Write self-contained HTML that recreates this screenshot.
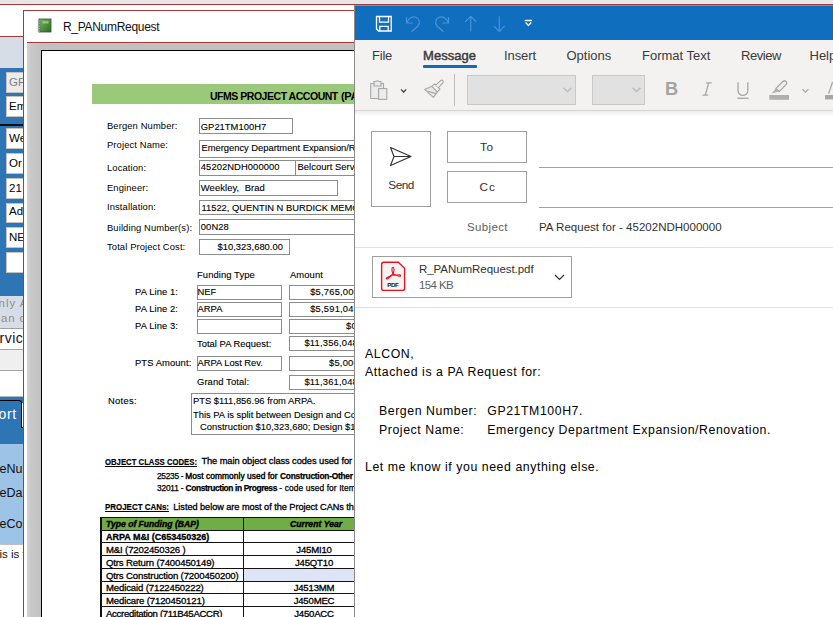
<!DOCTYPE html><html><head><meta charset="utf-8"><style>
html,body{margin:0;padding:0}
body{width:833px;height:617px;overflow:hidden;position:relative;background:#fff;font-family:"Liberation Sans",sans-serif}
div{box-sizing:border-box}
</style></head><body>
<div style="position:absolute;left:0px;top:0px;width:833px;height:4px;background:#e6e6e6"></div>
<div style="position:absolute;left:0px;top:4px;width:833px;height:1px;background:#a8383c"></div>
<div style="position:absolute;left:0px;top:36px;width:23px;height:1px;background:#a8383c"></div>
<div style="position:absolute;left:0px;top:37px;width:23px;height:31px;background:#d6dde6"></div>
<div style="position:absolute;left:0px;top:68px;width:23px;height:228px;background:#2e75b6"></div>
<div style="position:absolute;left:6px;top:72px;width:30px;height:20.5px;background:#ececec;border:1px solid #c9c0b8"></div>
<div style="position:absolute;left:9px;top:76.57px;font-size:11.5px;line-height:11.5px;color:#7f7f7f;font-weight:normal;letter-spacing:0px;white-space:pre;">GP</div>
<div style="position:absolute;left:6px;top:96px;width:30px;height:20.5px;background:#fff;border:1px solid #c9c0b8"></div>
<div style="position:absolute;left:9px;top:100.87px;font-size:11.5px;line-height:11.5px;color:#000;font-weight:normal;letter-spacing:0px;white-space:pre;">Em</div>
<div style="position:absolute;left:6px;top:128px;width:30px;height:20.5px;background:#fff;border:1px solid #c9c0b8"></div>
<div style="position:absolute;left:9px;top:132.97px;font-size:11.5px;line-height:11.5px;color:#000;font-weight:normal;letter-spacing:0px;white-space:pre;">We</div>
<div style="position:absolute;left:6px;top:153px;width:30px;height:20.5px;background:#fff;border:1px solid #c9c0b8"></div>
<div style="position:absolute;left:9px;top:157.77px;font-size:11.5px;line-height:11.5px;color:#000;font-weight:normal;letter-spacing:0px;white-space:pre;">Or</div>
<div style="position:absolute;left:6px;top:178px;width:30px;height:20.5px;background:#fff;border:1px solid #c9c0b8"></div>
<div style="position:absolute;left:9px;top:183.17px;font-size:11.5px;line-height:11.5px;color:#000;font-weight:normal;letter-spacing:0px;white-space:pre;">21</div>
<div style="position:absolute;left:6px;top:202.5px;width:30px;height:20.5px;background:#fff;border:1px solid #c9c0b8"></div>
<div style="position:absolute;left:9px;top:206.47px;font-size:11.5px;line-height:11.5px;color:#000;font-weight:normal;letter-spacing:0px;white-space:pre;">Ad</div>
<div style="position:absolute;left:6px;top:227px;width:30px;height:20.5px;background:#fff;border:1px solid #c9c0b8"></div>
<div style="position:absolute;left:9px;top:231.77px;font-size:11.5px;line-height:11.5px;color:#000;font-weight:normal;letter-spacing:0px;white-space:pre;">NE</div>
<div style="position:absolute;left:6px;top:252px;width:30px;height:20.5px;background:#fff;border:1px solid #c9c0b8"></div>
<div style="position:absolute;left:0px;top:124px;width:23px;height:1.5px;background:#111"></div>
<div style="position:absolute;left:0px;top:296px;width:23px;height:32px;background:#d6dde6"></div>
<div style="position:absolute;left:-1.5px;top:298.27px;font-size:11.5px;line-height:11.5px;color:#8f8f8f;font-weight:normal;letter-spacing:1.0px;white-space:pre;">nly A</div>
<div style="position:absolute;left:1px;top:312.87px;font-size:11.5px;line-height:11.5px;color:#8f8f8f;font-weight:normal;letter-spacing:0.8px;white-space:pre;">an c</div>
<div style="position:absolute;left:0px;top:328px;width:23px;height:1px;background:#a0a0a0"></div>
<div style="position:absolute;left:-0.5px;top:330.65px;font-size:14px;line-height:14px;color:#111;font-weight:normal;letter-spacing:0.5px;white-space:pre;">rvic</div>
<div style="position:absolute;left:0px;top:349px;width:23px;height:1px;background:#a8a8a8"></div>
<div style="position:absolute;left:0px;top:350px;width:23px;height:20px;background:#efefef"></div>
<div style="position:absolute;left:0px;top:370px;width:23px;height:1px;background:#a8a8a8"></div>
<div style="position:absolute;left:0px;top:396px;width:23px;height:1px;background:#b8b8b8"></div>
<div style="position:absolute;left:0px;top:397px;width:23px;height:47px;background:#2e75b6"></div>
<div style="position:absolute;left:-20px;top:400px;width:42px;height:28.2px;border-top:1.2px solid #000;border-right:1.2px solid #000;border-top-right-radius:3px;background:#2e75b6"></div>
<div style="position:absolute;left:-1.5px;top:406.85px;font-size:14px;line-height:14px;color:#fff;font-weight:normal;letter-spacing:0.6px;white-space:pre;">ort</div>
<div style="position:absolute;left:22px;top:402.5px;width:3px;height:25px;border-bottom:1.2px solid #000;background:#fff"></div>
<div style="position:absolute;left:0px;top:444px;width:23px;height:100px;background:#9dc3e6"></div>
<div style="position:absolute;left:-0.5px;top:462.92px;font-size:12.5px;line-height:12.5px;color:#111;font-weight:normal;letter-spacing:0px;white-space:pre;">eNu</div>
<div style="position:absolute;left:-0.5px;top:486.82px;font-size:12.5px;line-height:12.5px;color:#111;font-weight:normal;letter-spacing:0px;white-space:pre;">eDa</div>
<div style="position:absolute;left:-0.5px;top:518.42px;font-size:12.5px;line-height:12.5px;color:#111;font-weight:normal;letter-spacing:0px;white-space:pre;">eCo</div>
<div style="position:absolute;left:0px;top:544px;width:23px;height:1px;background:#c0c0c0"></div>
<div style="position:absolute;left:-0.5px;top:548.97px;font-size:11.5px;line-height:11.5px;color:#111;font-weight:normal;letter-spacing:0px;white-space:pre;">is is t</div>
<div style="position:absolute;left:23px;top:10px;width:340px;height:607px;background:#fff;border-left:1px solid #a8383c;border-top:1px solid #a8383c"></div>
<svg style="position:absolute;left:37px;top:18px" width="15" height="15" viewBox="0 0 15 15">
<defs><linearGradient id="bk" x1="0" y1="0" x2="1" y2="1"><stop offset="0" stop-color="#78b866"/><stop offset="1" stop-color="#2a6a26"/></linearGradient></defs>
<rect x="2" y="1" width="12" height="13" fill="url(#bk)" stroke="#2a5a25" stroke-width="0.8"/>
<rect x="5.5" y="3" width="6" height="2.6" fill="#a8d098" opacity="0.7"/>
<g fill="#fff" stroke="#444" stroke-width="0.5"><circle cx="2" cy="3" r="0.9"/><circle cx="2" cy="5.5" r="0.9"/><circle cx="2" cy="8" r="0.9"/><circle cx="2" cy="10.5" r="0.9"/><circle cx="2" cy="13" r="0.9"/></g>
</svg>
<div style="position:absolute;left:63px;top:20.84px;font-size:12px;line-height:12px;color:#111;font-weight:normal;letter-spacing:-0.3px;white-space:pre;">R_PANumRequest</div>
<div style="position:absolute;left:27px;top:42px;width:330px;height:1px;background:#a8383c"></div>
<div style="position:absolute;left:27px;top:43px;width:330px;height:574px;background:linear-gradient(90deg,#d6d6d6 0px,#cacaca 3px,#c1c1c1 14px,#c1c1c1 100%)"></div>
<div style="position:absolute;left:41px;top:50px;width:320px;height:567px;background:#fff;border-left:1.5px solid #000;border-top:1.5px solid #000"></div>
<div style="position:absolute;left:92px;top:84px;width:270px;height:20px;background:#9bc97a"></div>
<div style="position:absolute;left:210.3px;top:90.69px;font-size:11px;line-height:11px;color:#000;font-weight:bold;letter-spacing:-0.5px;white-space:pre;transform:scaleX(0.955);transform-origin:0 0">UFMS PROJECT ACCOUNT</div>
<div style="position:absolute;left:341px;top:90.69px;font-size:11px;line-height:11px;color:#000;font-weight:bold;letter-spacing:-0.3px;white-space:pre;">(PA</div>
<div style="position:absolute;left:107px;top:121.04px;font-size:9.4px;line-height:9.4px;color:#000;font-weight:normal;letter-spacing:0.12px;white-space:pre;">Bergen Number:</div>
<div style="position:absolute;left:107px;top:140.04px;font-size:9.4px;line-height:9.4px;color:#000;font-weight:normal;letter-spacing:0.12px;white-space:pre;">Project Name:</div>
<div style="position:absolute;left:107px;top:163.04px;font-size:9.4px;line-height:9.4px;color:#000;font-weight:normal;letter-spacing:0.12px;white-space:pre;">Location:</div>
<div style="position:absolute;left:107px;top:183.04px;font-size:9.4px;line-height:9.4px;color:#000;font-weight:normal;letter-spacing:0.12px;white-space:pre;">Engineer:</div>
<div style="position:absolute;left:107px;top:202.04px;font-size:9.4px;line-height:9.4px;color:#000;font-weight:normal;letter-spacing:0.12px;white-space:pre;">Installation:</div>
<div style="position:absolute;left:107px;top:223.04px;font-size:9.4px;line-height:9.4px;color:#000;font-weight:normal;letter-spacing:0.12px;white-space:pre;">Building Number(s):</div>
<div style="position:absolute;left:107px;top:242.04px;font-size:9.4px;line-height:9.4px;color:#000;font-weight:normal;letter-spacing:0.12px;white-space:pre;">Total Project Cost:</div>
<div style="position:absolute;left:199px;top:118px;width:94px;height:16px;border:1px solid #8c8c8c"></div>
<div style="position:absolute;left:200.8px;top:122.04px;font-size:9.4px;line-height:9.4px;color:#000;font-weight:normal;letter-spacing:0.02px;white-space:pre;;-webkit-text-stroke:0.12px #000">GP21TM100H7</div>
<div style="position:absolute;left:199px;top:140px;width:201px;height:18px;border:1px solid #8c8c8c"></div>
<div style="position:absolute;left:201.5px;top:143.04px;font-size:9.4px;line-height:9.4px;color:#000;font-weight:normal;letter-spacing:-0.02px;white-space:pre;;-webkit-text-stroke:0.12px #000">Emergency Department Expansion/Renovation</div>
<div style="position:absolute;left:199px;top:160px;width:97px;height:16px;border:1px solid #8c8c8c"></div>
<div style="position:absolute;left:295px;top:160px;width:105px;height:16px;border:1px solid #8c8c8c"></div>
<div style="position:absolute;left:200.8px;top:162.44px;font-size:9.4px;line-height:9.4px;color:#000;font-weight:normal;letter-spacing:0.08px;white-space:pre;;-webkit-text-stroke:0.12px #000">45202NDH000000</div>
<div style="position:absolute;left:297.5px;top:162.44px;font-size:9.4px;line-height:9.4px;color:#000;font-weight:normal;letter-spacing:0.05px;white-space:pre;;-webkit-text-stroke:0.12px #000">Belcourt Service Unit</div>
<div style="position:absolute;left:199px;top:180px;width:139px;height:16px;border:1px solid #8c8c8c"></div>
<div style="position:absolute;left:200.8px;top:182.54px;font-size:9.4px;line-height:9.4px;color:#000;font-weight:normal;letter-spacing:0.1px;white-space:pre;;-webkit-text-stroke:0.12px #000">Weekley,  Brad</div>
<div style="position:absolute;left:199px;top:200px;width:201px;height:15px;border:1px solid #8c8c8c"></div>
<div style="position:absolute;left:201.5px;top:202.74px;font-size:9.4px;line-height:9.4px;color:#000;font-weight:normal;letter-spacing:-0.02px;white-space:pre;;-webkit-text-stroke:0.12px #000">11522, QUENTIN N BURDICK MEMORIAL</div>
<div style="position:absolute;left:199px;top:219px;width:201px;height:16px;border:1px solid #8c8c8c"></div>
<div style="position:absolute;left:200.8px;top:221.64px;font-size:9.4px;line-height:9.4px;color:#000;font-weight:normal;letter-spacing:0.1px;white-space:pre;;-webkit-text-stroke:0.12px #000">00N28</div>
<div style="position:absolute;left:199px;top:239px;width:91px;height:16px;border:1px solid #8c8c8c"></div>
<div style="position:absolute;left:217.5px;top:241.74px;font-size:9.4px;line-height:9.4px;color:#000;font-weight:normal;letter-spacing:0.02px;white-space:pre;;-webkit-text-stroke:0.12px #000">$10,323,680.00</div>
<div style="position:absolute;left:197px;top:270.04px;font-size:9.4px;line-height:9.4px;color:#000;font-weight:normal;letter-spacing:0.1px;white-space:pre;;-webkit-text-stroke:0.12px #000">Funding Type</div>
<div style="position:absolute;left:290px;top:270.04px;font-size:9.4px;line-height:9.4px;color:#000;font-weight:normal;letter-spacing:0.1px;white-space:pre;;-webkit-text-stroke:0.12px #000">Amount</div>
<div style="position:absolute;left:135px;top:287.04px;font-size:9.4px;line-height:9.4px;color:#000;font-weight:normal;letter-spacing:0.1px;white-space:pre;;-webkit-text-stroke:0.12px #000">PA Line 1:</div>
<div style="position:absolute;left:135px;top:304.04px;font-size:9.4px;line-height:9.4px;color:#000;font-weight:normal;letter-spacing:0.1px;white-space:pre;;-webkit-text-stroke:0.12px #000">PA Line 2:</div>
<div style="position:absolute;left:135px;top:321.04px;font-size:9.4px;line-height:9.4px;color:#000;font-weight:normal;letter-spacing:0.1px;white-space:pre;;-webkit-text-stroke:0.12px #000">PA Line 3:</div>
<div style="position:absolute;left:197px;top:338.54px;font-size:9.4px;line-height:9.4px;color:#000;font-weight:normal;letter-spacing:0.03px;white-space:pre;;-webkit-text-stroke:0.12px #000">Total PA Request:</div>
<div style="position:absolute;left:135px;top:358.04px;font-size:9.4px;line-height:9.4px;color:#000;font-weight:normal;letter-spacing:0.1px;white-space:pre;;-webkit-text-stroke:0.12px #000">PTS Amount:</div>
<div style="position:absolute;left:197px;top:376.54px;font-size:9.4px;line-height:9.4px;color:#000;font-weight:normal;letter-spacing:0.1px;white-space:pre;;-webkit-text-stroke:0.12px #000">Grand Total:</div>
<div style="position:absolute;left:197px;top:284.5px;width:85px;height:15.5px;border:1px solid #8c8c8c"></div>
<div style="position:absolute;left:289px;top:284.5px;width:111px;height:15.5px;border:1px solid #8c8c8c"></div>
<div style="position:absolute;left:197px;top:301.5px;width:85px;height:15.0px;border:1px solid #8c8c8c"></div>
<div style="position:absolute;left:289px;top:301.5px;width:111px;height:15.0px;border:1px solid #8c8c8c"></div>
<div style="position:absolute;left:197px;top:318.5px;width:85px;height:15.5px;border:1px solid #8c8c8c"></div>
<div style="position:absolute;left:289px;top:318.5px;width:111px;height:15.5px;border:1px solid #8c8c8c"></div>
<div style="position:absolute;left:289px;top:335.5px;width:111px;height:15.5px;border:1px solid #8c8c8c"></div>
<div style="position:absolute;left:197px;top:355.5px;width:85px;height:15.5px;border:1px solid #8c8c8c"></div>
<div style="position:absolute;left:289px;top:355.5px;width:111px;height:15.5px;border:1px solid #8c8c8c"></div>
<div style="position:absolute;left:289px;top:375px;width:111px;height:15px;border:1px solid #8c8c8c"></div>
<div style="position:absolute;left:197.6px;top:286.64px;font-size:9.4px;line-height:9.4px;color:#000;font-weight:normal;letter-spacing:0.0px;white-space:pre;;-webkit-text-stroke:0.12px #000">NEF</div>
<div style="position:absolute;left:197.6px;top:303.64px;font-size:9.4px;line-height:9.4px;color:#000;font-weight:normal;letter-spacing:0.0px;white-space:pre;;-webkit-text-stroke:0.12px #000">ARPA</div>
<div style="position:absolute;left:197.6px;top:358.04px;font-size:9.4px;line-height:9.4px;color:#000;font-weight:normal;letter-spacing:-0.05px;white-space:pre;;-webkit-text-stroke:0.12px #000">ARPA Lost Rev.</div>
<div style="position:absolute;left:310.2px;top:286.64px;font-size:9.4px;line-height:9.4px;color:#000;font-weight:normal;letter-spacing:0.2px;white-space:pre;;-webkit-text-stroke:0.12px #000">$5,765,000.00</div>
<div style="position:absolute;left:310.2px;top:303.64px;font-size:9.4px;line-height:9.4px;color:#000;font-weight:normal;letter-spacing:0.2px;white-space:pre;;-webkit-text-stroke:0.12px #000">$5,591,048.96</div>
<div style="position:absolute;left:346px;top:320.84px;font-size:9.4px;line-height:9.4px;color:#000;font-weight:normal;letter-spacing:0.2px;white-space:pre;;-webkit-text-stroke:0.12px #000">$0.00</div>
<div style="position:absolute;left:304.4px;top:338.34px;font-size:9.4px;line-height:9.4px;color:#000;font-weight:normal;letter-spacing:0.2px;white-space:pre;;-webkit-text-stroke:0.12px #000">$11,356,048.96</div>
<div style="position:absolute;left:329px;top:358.04px;font-size:9.4px;line-height:9.4px;color:#000;font-weight:normal;letter-spacing:0.2px;white-space:pre;;-webkit-text-stroke:0.12px #000">$5,000.00</div>
<div style="position:absolute;left:304.4px;top:376.54px;font-size:9.4px;line-height:9.4px;color:#000;font-weight:normal;letter-spacing:0.2px;white-space:pre;;-webkit-text-stroke:0.12px #000">$11,361,048.96</div>
<div style="position:absolute;left:108px;top:396.44px;font-size:9.4px;line-height:9.4px;color:#000;font-weight:normal;letter-spacing:0.3px;white-space:pre;;-webkit-text-stroke:0.12px #000">Notes:</div>
<div style="position:absolute;left:191px;top:393px;width:209px;height:41.5px;border:1px solid #8c8c8c"></div>
<div style="position:absolute;left:193px;top:396.34px;font-size:9.4px;line-height:9.4px;color:#000;font-weight:normal;letter-spacing:0.0px;white-space:pre;;-webkit-text-stroke:0.12px #000">PTS $111,856.96 from ARPA.</div>
<div style="position:absolute;left:193px;top:410.04px;font-size:9.4px;line-height:9.4px;color:#000;font-weight:normal;letter-spacing:0.0px;white-space:pre;;-webkit-text-stroke:0.12px #000">This PA is split between Design and Construction</div>
<div style="position:absolute;left:200px;top:422.34px;font-size:9.4px;line-height:9.4px;color:#000;font-weight:normal;letter-spacing:0.02px;white-space:pre;;-webkit-text-stroke:0.12px #000">Construction $10,323,680; Design $1</div>
<div style="position:absolute;left:105px;top:456.70px;font-size:9.8px;line-height:9.8px;color:#000;font-weight:bold;letter-spacing:0px;white-space:pre;transform:scaleX(0.79);transform-origin:0 0;-webkit-text-stroke:0.2px #000"><u>OBJECT CLASS CODES:</u></div>
<div style="position:absolute;left:201.4px;top:456.83px;font-size:9.3px;line-height:9.3px;color:#000;font-weight:normal;letter-spacing:-0.08px;white-space:pre;;-webkit-text-stroke:0.3px #000">The main object class codes used for construction</div>
<div style="position:absolute;left:157px;top:471.59px;font-size:8.4px;line-height:8.4px;color:#000;font-weight:normal;letter-spacing:0.05px;white-space:pre;;-webkit-text-stroke:0.25px #000"><span style="letter-spacing:-0.3px">25235 - </span><span style="-webkit-text-stroke:0.4px #000">Most commonly used for </span><b style="letter-spacing:-0.25px">Construction-Other</b></div>
<div style="position:absolute;left:157px;top:484.09px;font-size:8.4px;line-height:8.4px;color:#000;font-weight:normal;letter-spacing:0.1px;white-space:pre;;-webkit-text-stroke:0.25px #000"><span style="letter-spacing:-0.2px">32011 - </span><b style="letter-spacing:-0.38px">Construction in Progress</b> - code used for Items</div>
<div style="position:absolute;left:105px;top:502.40px;font-size:9.8px;line-height:9.8px;color:#000;font-weight:bold;letter-spacing:0px;white-space:pre;transform:scaleX(0.81);transform-origin:0 0;-webkit-text-stroke:0.2px #000"><u>PROJECT CANs:</u></div>
<div style="position:absolute;left:173.3px;top:502.81px;font-size:9.2px;line-height:9.2px;color:#000;font-weight:normal;letter-spacing:-0.05px;white-space:pre;;-webkit-text-stroke:0.3px #000">Listed below are most of the Project CANs that</div>
<div style="position:absolute;left:100.5px;top:517px;width:300px;height:13px;background:#70ad47"></div>
<div style="position:absolute;left:100.5px;top:516.5px;width:300px;height:1px;background:#111"></div>
<div style="position:absolute;left:100.5px;top:529.5px;width:300px;height:1px;background:#111"></div>
<div style="position:absolute;left:100.5px;top:542.1px;width:300px;height:1px;background:#111"></div>
<div style="position:absolute;left:100.5px;top:554.8px;width:300px;height:1px;background:#111"></div>
<div style="position:absolute;left:100.5px;top:567.7px;width:300px;height:1px;background:#111"></div>
<div style="position:absolute;left:100.5px;top:580.7px;width:300px;height:1px;background:#111"></div>
<div style="position:absolute;left:100.5px;top:593.0px;width:300px;height:1px;background:#111"></div>
<div style="position:absolute;left:100.5px;top:605.7px;width:300px;height:1px;background:#111"></div>
<div style="position:absolute;left:100.5px;top:618.5px;width:300px;height:1px;background:#111"></div>
<div style="position:absolute;left:100px;top:517px;width:1.5px;height:100px;background:#111"></div>
<div style="position:absolute;left:243px;top:517px;width:1.2px;height:100px;background:#111"></div>
<div style="position:absolute;left:244.2px;top:569px;width:150px;height:12px;background:#dde4f6"></div>
<div style="position:absolute;left:106px;top:519.72px;font-size:8.6px;line-height:8.6px;color:#000;font-weight:bold;letter-spacing:0px;white-space:pre;;-webkit-text-stroke:0.4px #000"><i>Type of Funding (BAP)</i></div>
<div style="position:absolute;left:290px;top:519.72px;font-size:8.6px;line-height:8.6px;color:#000;font-weight:bold;letter-spacing:0.05px;white-space:pre;;-webkit-text-stroke:0.4px #000"><i>Current Year</i></div>
<div style="position:absolute;left:106px;top:533.08px;font-size:9.0px;line-height:9.0px;color:#000;font-weight:bold;letter-spacing:-0.02px;white-space:pre;;-webkit-text-stroke:0.3px #000">ARPA M&amp;I (C653450326)</div>
<div style="position:absolute;left:106px;top:545.17px;font-size:9.6px;line-height:9.6px;color:#000;font-weight:normal;letter-spacing:-0.15px;white-space:pre;;-webkit-text-stroke:0.3px #000">M&amp;I (7202450326 )</div>
<div style="position:absolute;left:264px;top:545.17px;font-size:9.6px;line-height:9.6px;color:#000;font-weight:normal;letter-spacing:-0.2px;white-space:pre;width:100px;text-align:center;-webkit-text-stroke:0.3px #000">J45MI10</div>
<div style="position:absolute;left:106px;top:557.77px;font-size:9.6px;line-height:9.6px;color:#000;font-weight:normal;letter-spacing:-0.15px;white-space:pre;;-webkit-text-stroke:0.3px #000">Qtrs Return (7400450149)</div>
<div style="position:absolute;left:264px;top:557.77px;font-size:9.6px;line-height:9.6px;color:#000;font-weight:normal;letter-spacing:-0.2px;white-space:pre;width:100px;text-align:center;-webkit-text-stroke:0.3px #000">J45QT10</div>
<div style="position:absolute;left:106px;top:570.97px;font-size:9.6px;line-height:9.6px;color:#000;font-weight:normal;letter-spacing:-0.15px;white-space:pre;;-webkit-text-stroke:0.3px #000">Qtrs Construction (7200450200)</div>
<div style="position:absolute;left:106px;top:583.37px;font-size:9.6px;line-height:9.6px;color:#000;font-weight:normal;letter-spacing:-0.15px;white-space:pre;;-webkit-text-stroke:0.3px #000">Medicaid (7122450222)</div>
<div style="position:absolute;left:264px;top:583.37px;font-size:9.6px;line-height:9.6px;color:#000;font-weight:normal;letter-spacing:-0.2px;white-space:pre;width:100px;text-align:center;-webkit-text-stroke:0.3px #000">J4513MM</div>
<div style="position:absolute;left:106px;top:596.17px;font-size:9.6px;line-height:9.6px;color:#000;font-weight:normal;letter-spacing:-0.15px;white-space:pre;;-webkit-text-stroke:0.3px #000">Medicare (7120450121)</div>
<div style="position:absolute;left:264px;top:596.17px;font-size:9.6px;line-height:9.6px;color:#000;font-weight:normal;letter-spacing:-0.2px;white-space:pre;width:100px;text-align:center;-webkit-text-stroke:0.3px #000">J450MEC</div>
<div style="position:absolute;left:106px;top:608.87px;font-size:9.6px;line-height:9.6px;color:#000;font-weight:normal;letter-spacing:-0.3px;white-space:pre;;-webkit-text-stroke:0.3px #000">Accreditation (711B45ACCR)</div>
<div style="position:absolute;left:264px;top:608.87px;font-size:9.6px;line-height:9.6px;color:#000;font-weight:normal;letter-spacing:-0.2px;white-space:pre;width:100px;text-align:center;-webkit-text-stroke:0.3px #000">J450ACC</div>
<div style="position:absolute;left:354px;top:5px;width:479px;height:612px;background:#fff;border-left:1px solid #8a8a8a;border-top:1px solid #9a8c84"></div>
<div style="position:absolute;left:355px;top:6px;width:478px;height:34px;background:#106ebe"></div>
<div style="position:absolute;left:355px;top:40px;width:478px;height:70px;background:#f3f2f1"></div>
<div style="position:absolute;left:355px;top:110px;width:478px;height:1px;background:#d6d5d4"></div>
<div style="position:absolute;left:355px;top:111px;width:478px;height:5px;background:linear-gradient(#ececec,#fff)"></div>
<svg style="position:absolute;left:355px;top:6px" width="200" height="34" viewBox="355 6 200 34">
<g fill="none" stroke="#fff" stroke-width="1.3">
<path d="M376.5 16.5 H391.2 V31 H378.5 L376.5 29 Z"/>
<path d="M379.5 16.5 V22.2 H388.5 V16.5"/>
<path d="M379.8 31 V26.3 H388.2 V31"/>
</g>
<g fill="none" stroke="#4b92d4" stroke-width="1.2">
<path d="M406.5 17 V23 H412.5"/><path d="M406.8 22.5 C409 17.5 413 16 416 17.3 C419.5 19 420.5 23 418 26 L411.5 31.8"/>
<path d="M448.5 17 V23 H442.5"/><path d="M448.2 22.5 C446 17.5 442 16 439 17.3 C435.5 19 434.5 23 437 26 L443.5 31.8"/>
<path d="M470.7 16.5 V31.6 M465.2 21.8 L470.7 16.3 L476.2 21.8"/>
<path d="M499.3 16.2 V31.4 M494 26.2 L499.3 31.5 L504.6 26.2"/>
</g>
<g fill="none" stroke="#fff" stroke-width="1.4"><path d="M524.7 20.5 H532"/><path d="M525.6 22.6 L528.4 25.4 L531.2 22.6"/></g>
</svg>
<div style="position:absolute;left:372px;top:48.80px;font-size:13px;line-height:13px;color:#3b3a39;font-weight:normal;letter-spacing:-0.2px;white-space:pre;">File</div>
<div style="position:absolute;left:423px;top:48.80px;font-size:13px;line-height:13px;color:#3b3a39;font-weight:normal;letter-spacing:0.05px;white-space:pre;-webkit-text-stroke:0.45px #3b3a39">Message</div>
<div style="position:absolute;left:423px;top:65px;width:54px;height:3px;background:#0f6cbd;border-radius:1px"></div>
<div style="position:absolute;left:504px;top:48.80px;font-size:13px;line-height:13px;color:#3b3a39;font-weight:normal;letter-spacing:-0.1px;white-space:pre;">Insert</div>
<div style="position:absolute;left:566.5px;top:48.80px;font-size:13px;line-height:13px;color:#3b3a39;font-weight:normal;letter-spacing:0px;white-space:pre;">Options</div>
<div style="position:absolute;left:642px;top:48.80px;font-size:13px;line-height:13px;color:#3b3a39;font-weight:normal;letter-spacing:0px;white-space:pre;">Format Text</div>
<div style="position:absolute;left:741px;top:48.80px;font-size:13px;line-height:13px;color:#3b3a39;font-weight:normal;letter-spacing:-0.45px;white-space:pre;">Review</div>
<div style="position:absolute;left:809.5px;top:48.80px;font-size:13px;line-height:13px;color:#3b3a39;font-weight:normal;letter-spacing:0px;white-space:pre;">Help</div>
<svg style="position:absolute;left:355px;top:70px" width="478" height="40" viewBox="355 70 478 40">
<g stroke="#a6a6a6" stroke-width="1.1" fill="#ebebeb">
<path d="M370.7 83.5 H374 V81.5 H376 Q377.5 80 379 81.5 H381 V83.5 H383.5 V98.5 H370.7 Z"/>
<path d="M374 83.5 V86 H381 V83.5" fill="none"/>
<rect x="378.6" y="88.6" width="8.2" height="10.8" fill="#ececec"/>
</g>
<path d="M401 89.4 L403.6 92 L406.2 89.4" fill="none" stroke="#404040" stroke-width="1.3"/>
<g stroke="#a6a6a6" stroke-width="1.1" fill="#e8e8e8" stroke-linejoin="round">
<path d="M424.6 89.4 L432 86.2 L437.6 91.6 L433.4 97.4 Z"/>
<path d="M427.5 91.2 L436.2 93.6" fill="none"/>
<path d="M431.8 86.4 L434.6 83.8 L440 89.2 L437.4 91.8 Z" fill="#f0f0f0"/>
<path d="M435.8 85.2 L440.6 80.6 Q441.8 79.6 442.8 80.6 Q443.8 81.6 442.8 82.8 L438.4 87.6" fill="#f3f2f1"/>
</g>
<path d="M454.5 74 V106" stroke="#bdbdbd" stroke-width="1"/>
<rect x="467.5" y="75.5" width="108" height="29" fill="#e1e1e1" stroke="#c8c8c8"/>
<path d="M563.6 87.8 L567.5 91.6 L571.4 87.8" fill="none" stroke="#c2c2c2" stroke-width="1.7"/>
<rect x="592.5" y="75.5" width="52" height="29" fill="#e1e1e1" stroke="#c8c8c8"/>
<path d="M632.6 87.8 L636.5 91.6 L640.4 87.8" fill="none" stroke="#c2c2c2" stroke-width="1.7"/>
<g fill="none" stroke="#a6a6a6" stroke-width="1.3">
<path d="M738 82.3 V90.5 A4.9 4.9 0 0 0 747.8 90.5 V82.3"/><path d="M737.3 98.3 H748.6"/>
<path d="M775.9 88.4 L782.9 81.4 Q784.5 80 786.1 81.4 Q787.5 83 786.1 84.6 L779.1 91.6 Z" fill="#ececec" stroke-linejoin="round"/><path d="M775.9 88.4 L779.1 91.6 L771.5 93.6 Z" fill="#b0b0b0" stroke="none"/>
<path d="M802.4 89.1 L805.4 92.1 L808.4 89.1"/>
</g>
<rect x="769.3" y="95" width="19.7" height="4.8" fill="#b3afad"/>
<rect x="825" y="95" width="10" height="4.4" fill="#a6a6a6"/>
<path d="M828.6 93.6 L832.6 82" stroke="#a6a6a6" stroke-width="1.3"/>
</svg>
<div style="position:absolute;left:665px;top:79.8px;font-size:18.5px;line-height:18.5px;font-weight:bold;color:#a3a3a3;transform:scaleX(0.98);transform-origin:0 0">B</div>
<svg style="position:absolute;left:700px;top:80px" width="14" height="18" viewBox="700 80 14 18"><path d="M705.8 82.9 H711.6 M702.4 95 H708.2 M708.7 82.9 L705.3 95" fill="none" stroke="#a6a6a6" stroke-width="1.25"/></svg>
<div style="position:absolute;left:371px;top:131px;width:60px;height:76px;border:1px solid #a19f9d"></div>
<svg style="position:absolute;left:388px;top:145px" width="26" height="24" viewBox="0 0 26 24">
<path d="M2.5 2.5 L23 11.5 L2.5 20.5 L6 11.5 Z M6 11.5 H23" fill="none" stroke="#323130" stroke-width="1.1" stroke-linejoin="round"/>
</svg>
<div style="position:absolute;left:388.3px;top:180.01px;font-size:11.8px;line-height:11.8px;color:#323130;font-weight:normal;letter-spacing:-0.5px;white-space:pre;">Send</div>
<div style="position:absolute;left:447px;top:131px;width:80px;height:32px;border:1px solid #a19f9d"></div>
<div style="position:absolute;left:480px;top:142.01px;font-size:11.8px;line-height:11.8px;color:#323130;font-weight:normal;letter-spacing:0.6px;white-space:pre;">To</div>
<div style="position:absolute;left:447px;top:171px;width:80px;height:32px;border:1px solid #a19f9d"></div>
<div style="position:absolute;left:479.5px;top:182.01px;font-size:11.8px;line-height:11.8px;color:#323130;font-weight:normal;letter-spacing:1px;white-space:pre;">Cc</div>
<div style="position:absolute;left:539px;top:167px;width:294px;height:1px;background:#a19f9d"></div>
<div style="position:absolute;left:539px;top:207px;width:294px;height:1px;background:#a19f9d"></div>
<div style="position:absolute;left:467px;top:222.27px;font-size:11.5px;line-height:11.5px;color:#605e5c;font-weight:normal;letter-spacing:0.35px;white-space:pre;">Subject</div>
<div style="position:absolute;left:539px;top:222.27px;font-size:11.5px;line-height:11.5px;color:#323130;font-weight:normal;letter-spacing:0.02px;white-space:pre;">PA Request for - 45202NDH000000</div>
<div style="position:absolute;left:355px;top:247px;width:478px;height:1px;background:#e1dfdd"></div>
<div style="position:absolute;left:372px;top:256px;width:200px;height:42px;border:1px solid #a19f9d"></div>
<svg style="position:absolute;left:376px;top:258px" width="34" height="38" viewBox="376 258 34 38">
<path d="M383.8 262.2 H398.3 L404.6 268.2 V288.2 Q404.6 290.4 402.4 290.4 H383.8 Q381.6 290.4 381.6 288.2 V264.4 Q381.6 262.2 383.8 262.2 Z" fill="#f4f4f4" stroke="#e8141c" stroke-width="1.4"/>
<g fill="none" stroke="#e8141c" stroke-width="1.1">
<path d="M393 273.8 C391.5 270.5 391.6 267.5 393 267.3 C394.4 267.5 394.3 270.5 393 273.8 Z"/>
<path d="M393 273.8 C390.5 276 387.5 277.5 386.6 278 C385.8 278.6 386.6 279.4 387.6 278.8 C389.5 277.6 391.5 275.8 393 273.8 Z"/>
<path d="M393 273.8 C395.5 275 398.5 276.6 400 276.3 C401 276 400.6 274.8 399.4 274.8 C397.5 274.8 395 275 393 275.2 Z"/>
</g>
<text x="392.8" y="287.4" font-size="6.2" font-weight="bold" text-anchor="middle" fill="#222" font-family="Liberation Sans" letter-spacing="-0.35">PDF</text>
</svg>
<div style="position:absolute;left:419px;top:263.97px;font-size:11.5px;line-height:11.5px;color:#323130;font-weight:normal;letter-spacing:-0.05px;white-space:pre;">R_PANumRequest.pdf</div>
<div style="position:absolute;left:419px;top:279.87px;font-size:11.5px;line-height:11.5px;color:#605e5c;font-weight:normal;letter-spacing:-0.6px;white-space:pre;">154 KB</div>
<svg style="position:absolute;left:553px;top:272px" width="13" height="10" viewBox="0 0 13 10"><path d="M2 3 l4.5 4.5 l4.5 -4.5" fill="none" stroke="#323130" stroke-width="1.2"/></svg>
<div style="position:absolute;left:355px;top:307px;width:478px;height:1px;background:#e1dfdd"></div>
<div style="position:absolute;left:365px;top:347.59px;font-size:12.3px;line-height:12.3px;color:#000;font-weight:normal;letter-spacing:0.57px;white-space:pre;">ALCON,</div>
<div style="position:absolute;left:365px;top:366.29px;font-size:12.3px;line-height:12.3px;color:#000;font-weight:normal;letter-spacing:0.57px;white-space:pre;">Attached is a PA Request for:</div>
<div style="position:absolute;left:379px;top:404.59px;font-size:12.3px;line-height:12.3px;color:#000;font-weight:normal;letter-spacing:0.57px;white-space:pre;">Bergen Number:</div>
<div style="position:absolute;left:487.3px;top:404.59px;font-size:12.3px;line-height:12.3px;color:#000;font-weight:normal;letter-spacing:0.57px;white-space:pre;">GP21TM100H7.</div>
<div style="position:absolute;left:379px;top:423.79px;font-size:12.3px;line-height:12.3px;color:#000;font-weight:normal;letter-spacing:0.57px;white-space:pre;">Project Name:</div>
<div style="position:absolute;left:487.3px;top:423.79px;font-size:12.3px;line-height:12.3px;color:#000;font-weight:normal;letter-spacing:0.57px;white-space:pre;">Emergency Department Expansion/Renovation.</div>
<div style="position:absolute;left:365px;top:460.59px;font-size:12.3px;line-height:12.3px;color:#000;font-weight:normal;letter-spacing:0.57px;white-space:pre;">Let me know if you need anything else.</div>
</body></html>
